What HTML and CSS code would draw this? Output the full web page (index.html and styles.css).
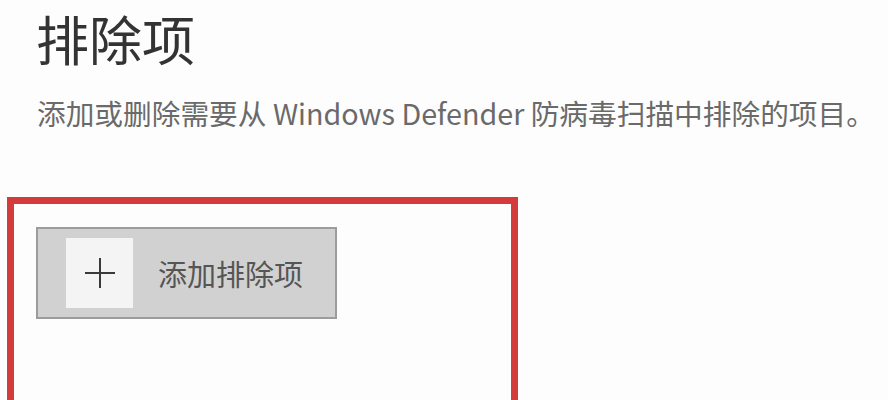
FILE: index.html
```html
<!DOCTYPE html>
<html lang="zh-CN">
<head>
<meta charset="utf-8">
<link rel="stylesheet" href="styles.css">
</head>
<body>
<div class="page">
  <h1 class="title">排除项</h1>
  <p class="desc">添加或删除需要从 Windows Defender 防病毒扫描中排除的项目。</p>
  <div class="highlight">
    <button class="add-btn" type="button">
      <span class="icon-box">
        <svg width="32" height="32" viewBox="0 0 32 32"><path d="M16 1V31M1 16H31" stroke="#3a3a3a" stroke-width="2" fill="none"/></svg>
      </span>
      <span class="btn-label">添加排除项</span>
    </button>
  </div>
</div>
</body>
</html>
```
FILE: styles.css
```css
html, body {
  margin: 0;
  padding: 0;
  background: #fdfdfd;
  overflow: hidden;
}
.page {
  width: 888px;
  height: 400px;
  font-family: "Noto Sans CJK SC", "Open Sans", sans-serif;
}
.title {
  margin: 0;
  padding: 8px 0 0 36px;
  font-size: 53px;
  font-weight: 400;
  line-height: 60px;
  color: #333;
}
.desc {
  margin: 0;
  padding: 27px 0 0 37px;
  font-size: 28.7px;
  line-height: 36px;
  color: #6a6a6a;
  white-space: nowrap;
}
.highlight {
  margin: 66px 0 0 7px;
  width: 511px;
  height: 203px;
  border: 7px solid #d43b3b;
  border-bottom: none;
  padding: 23px 0 0 22px;
  box-sizing: border-box;
}
.add-btn {
  display: flex;
  align-items: center;
  width: 301px;
  height: 92px;
  padding: 0 0 0 28px;
  margin: 0;
  border: 2px solid #9c9c9c;
  background: #d1d1d1;
  box-sizing: border-box;
  font-family: inherit;
  cursor: pointer;
}
.icon-box {
  width: 67px;
  height: 70px;
  background: #f4f4f4;
  display: flex;
  align-items: center;
  justify-content: center;
}
.btn-label {
  margin-left: 25px;
  font-size: 29px;
  color: #555;
  line-height: 1;
}
```
